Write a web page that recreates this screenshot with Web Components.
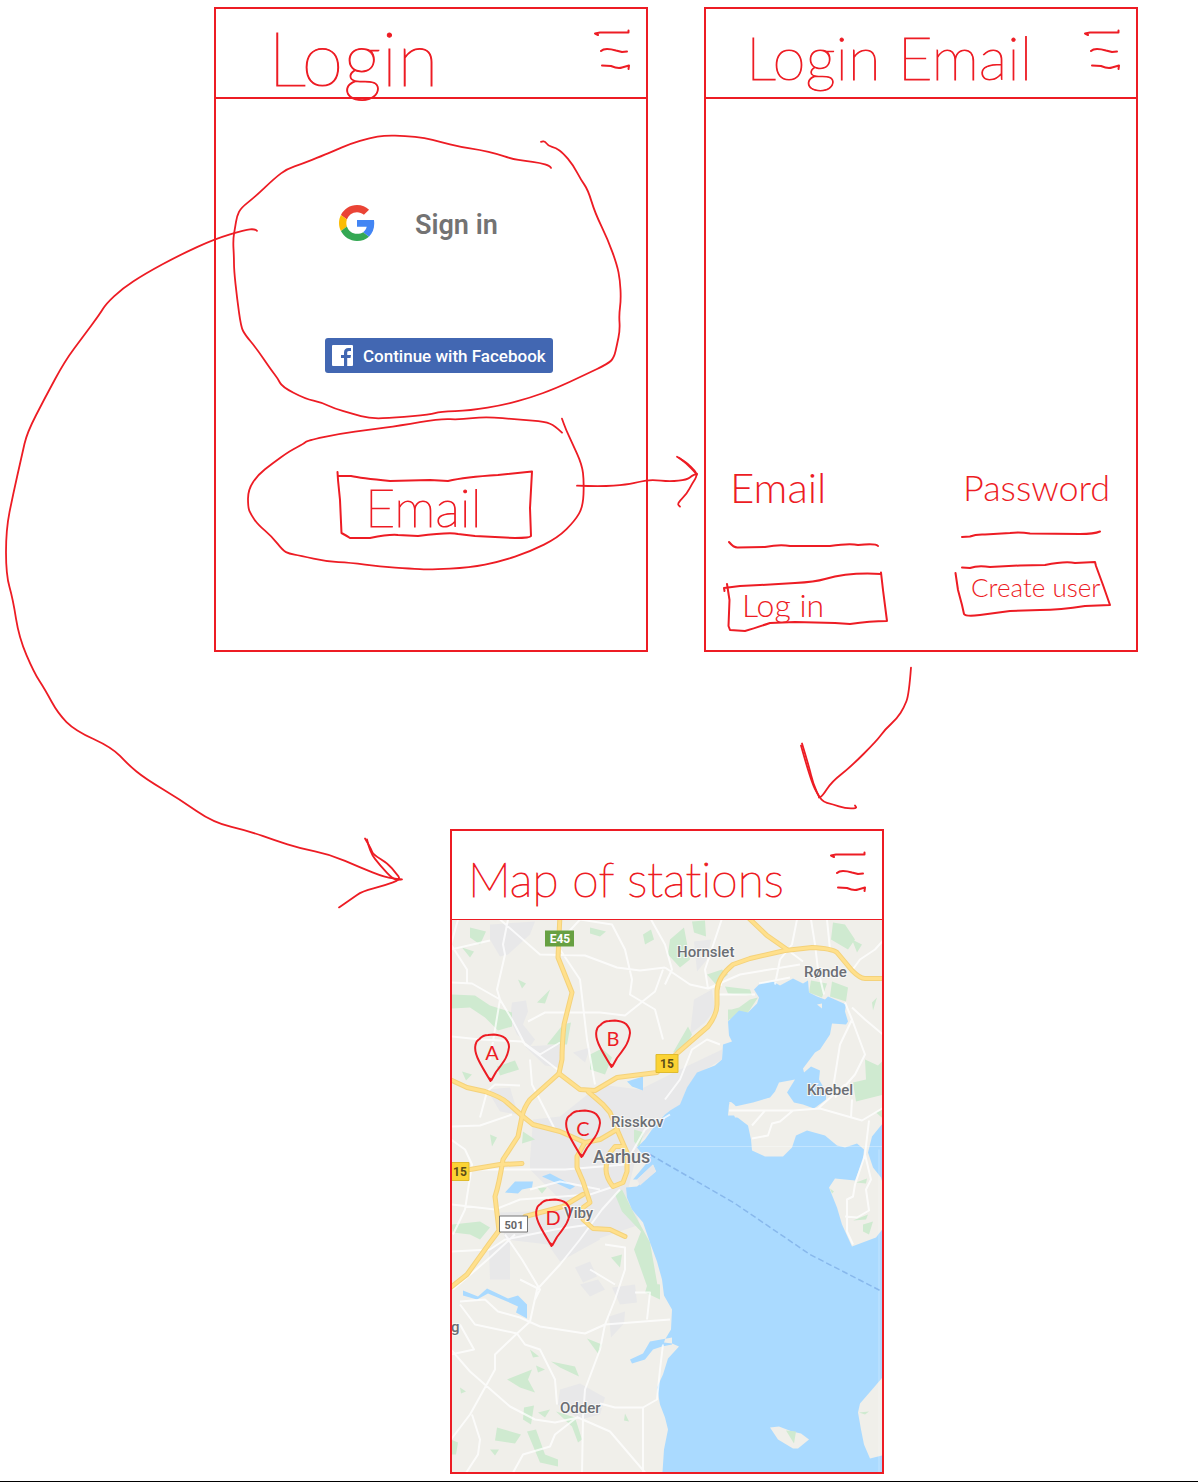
<!DOCTYPE html>
<html lang="en">
<head>
<meta charset="utf-8">
<title>Login flow wireframe</title>
<style>
  body { margin: 0; background: #fff; --ink: #ed1c24; }
</style>
</head>
<body>
<flow-board>
  <wire-screen class="login" heading="Login" style="--title-size: 76px; --title-inset: 52px">
    <login-options></login-options>
  </wire-screen>
  <wire-screen class="email" heading="Login Email" style="--title-size: 60px; --title-inset: 40px">
    <email-form></email-form>
  </wire-screen>
  <wire-screen class="map" heading="Map of stations" style="--title-size: 48px; --title-inset: 16px; --rule: 1px">
    <station-map></station-map>
  </wire-screen>
</flow-board>

<script>
const HAND = '"Lato", "Open Sans", sans-serif';

// Turns "x,y x,y ..." into a path that runs smoothly through the midpoints.
function smooth(points) {
  const p = points.trim().split(/\s+/).map(s => s.split(',').map(Number));
  let d = `M${p[0]}`;
  for (let i = 1; i < p.length - 1; i++) {
    d += `Q${p[i]} ${(p[i][0] + p[i + 1][0]) / 2},${(p[i][1] + p[i + 1][1]) / 2}`;
  }
  return d + `L${p[p.length - 1]}`;
}
const strokes = list => list.map(s => `<path d="${smooth(s)}"/>`).join('');

function define(name, render) {
  customElements.define(name, class extends HTMLElement {
    connectedCallback() {
      if (!this.shadowRoot) this.attachShadow({ mode: 'open' }).innerHTML = render(this);
    }
  });
}

define('flow-board', () => `
<style>
  :host {
    position: relative; display: grid; box-sizing: border-box;
    grid-template-columns: minmax(0,214fr) minmax(0,236fr) minmax(0,198fr) minmax(0,56fr) minmax(0,180fr) minmax(0,254fr) minmax(0,60fr);
    grid-auto-rows: auto; row-gap: 177px; padding: 7px 0; border-bottom: 1px solid #000;
  }
  ::slotted(.login) { grid-area: 1 / 2 / 2 / 4; }
  ::slotted(.email) { grid-area: 1 / 5 / 2 / 7; }
  ::slotted(.map) { grid-area: 2 / 3 / 3 / 6; }
  svg { position: absolute; inset: 0; width: 100%; height: 100%; pointer-events: none;
        fill: none; stroke: var(--ink); stroke-width: 1.8; stroke-linecap: round; stroke-linejoin: round; }
</style>
<slot></slot>
<svg viewBox="0 0 1198 1482" preserveAspectRatio="none" aria-hidden="true">${strokes([
  '551,168 550,166 540,163 525,161 512,159 497,154 480,150 460,147 440,142 425,138 405,136 385,135.5 370,138 350,144 334,151 322,156 302,164 287,169 275,178 255,197 241,208 237,216 235,228 233,240 234,258 234,270 237,298 241,327 245,335 256,348 271,370 278,379 282,387 305,399 322,403 335,409 352,414 370,419 395,418 430,415 440,412 470,411 505,405 530,398 555,389 585,375 608,364 614,358 617,345 620,330 619,315 621,300 620,280 617,265 608,240 595,213 588,190 581,180 573,165 563,153 556,148 548,146 545,141 541,142',
  '562,433 555,426 545,422 520,420 485,417 460,420 440,419 400,426 370,430 340,434 307,441 304,444 290,451 272,464 258,475 248,490 248,508 251,515 258,525 272,537 283,551 289,554 300,556 327,562 350,563 380,567 410,569 430,570 470,568 500,562 530,552 558,538 575,521 583,507 584,482 582,465 572,443 566,430 562,419',
  '577,486 600,487 627,485 640,482 652,480 670,482 687,480 692,476 697,474',
  '677,457 684,461 691,467 698,475 692,484 687,494 677,504 680,507',
  '679,458 686,463 697,475',
  '257,231 255,229 245,230 215,239 180,255 145,274 122,289 106,304 100,314 83,337 65,361 45,398 27,433 22,455 13,495 6,530 6,575 13,600 19,638 34,673 45,690 58,714 75,731 112,748 128,765 145,779 180,800 213,823 250,832 275,841 300,849 330,855 360,868 385,878 401,880',
  '365,839 371,849 373,855 388,864 396,874 401,880 385,886 362,892 352,899 339,908',
  '367,840 370,853 380,866 394,881 402,880',
  '911,668 909,695 904,708 897,719 885,730 877,741 850,768 832,782 822,797 819,798',
  '802,744 809,767 813,784 821,802 833,805 845,809 857,809 855,806',
  '801,746 811,782 819,797'
])}</svg>`);

define('wire-screen', el => `
<style>
  :host { display: flex; flex-direction: column; box-sizing: border-box; min-height: 645px; border: 2px solid var(--ink); }
  header { display: flex; align-items: center; justify-content: space-between; box-sizing: border-box;
           height: calc(88px + var(--rule, 2px)); padding: 0 14px 0 var(--title-inset); border-bottom: var(--rule, 2px) solid var(--ink); }
  h1 { margin: 0; padding-top: 8px; color: var(--ink); font: 100 var(--title-size)/72px ${HAND}; font-variant-ligatures: none;
       -webkit-text-stroke: 1px var(--ink); white-space: nowrap; }
  button { padding: 0 0 6px; border: 0; background: none; display: block; }
  svg { display: block; width: 38px; height: 42px; fill: none; stroke: var(--ink); stroke-width: 2; stroke-linecap: round; stroke-linejoin: round; }
  main { flex: 1; display: flex; flex-direction: column; }
  ::slotted(*) { flex: 1; }
</style>
<header>
  <h1>${el.getAttribute('heading')}</h1>
  <button aria-label="Menu"><svg viewBox="594 28 38 42">
    <path d="M598 34l-3-1.500 5-1h28.500v-2M601 50q2-2 6-2t9 1.500l6 1.500 5-.5M602 64.500l9 .5q7 3 11 1.500l7-2-.5 3.500"/></svg></button>
</header>
<main><slot></slot></main>`);

define('sketch-button', el => `
<style>
  :host { display: block; }
  button { position: relative; display: flex; box-sizing: border-box; width: 100%; height: 72px;
           align-items: var(--align, center); padding: var(--drop, 8px) 0 0 var(--inset, 16px); border: 0; background: none;
           color: var(--ink); font: var(--weight, 300) var(--size)/40px ${HAND}; -webkit-text-stroke: var(--thicken, 0) var(--ink); white-space: nowrap; }
  svg { position: absolute; inset: 0; width: 100%; height: 100%; overflow: visible; fill: none; stroke: var(--ink); stroke-width: 2; stroke-linejoin: round; stroke-linecap: round; }
</style>
<button><svg viewBox="${el.getAttribute('view')}" preserveAspectRatio="none" aria-hidden="true"><path d="${el.getAttribute('outline')}"/></svg><slot></slot></button>`);

define('login-options', () => `
<style>
  :host { display: flex; flex-direction: column; align-items: center; gap: 96px; padding: 105px 0 0 16px; }
  button, sketch-button { width: 228px; box-sizing: border-box; }
  button { display: flex; align-items: center; border: 0; font-family: Roboto, sans-serif; white-space: nowrap; }
  .google { height: 38px; padding: 0 0 0 14px; gap: 40px; background: none; color: #737373; font-size: 27px; font-weight: 600; }
  .google svg { width: 36px; height: 36px; }
  .google span { padding-top: 4px; }
  .facebook { height: 35px; padding: 0 0 0 7px; gap: 10px; border-radius: 3px; background: #4267b2; color: #fff; font-size: 17px; font-weight: 500; }
  .facebook svg { width: 21px; height: 21px; }
  sketch-button { --size: 52px; --inset: 40px; --drop: 4px; --weight: 100; --thicken: 1px; }
</style>
<button class="google"><svg viewBox="0 0 48 48" aria-hidden="true">
  <path fill="#ea4335" d="M24 9.500c3.540 0 6.710 1.220 9.210 3.600l6.850-6.850C35.900 2.380 30.470 0 24 0 14.620 0 6.510 5.380 2.560 13.220l7.980 6.190C12.430 13.720 17.740 9.500 24 9.500z"/>
  <path fill="#4285f4" d="M46.980 24.550c0-1.570-.15-3.090-.38-4.550H24v9.020h12.940c-.58 2.960-2.260 5.480-4.780 7.180l7.730 6c4.510-4.180 7.090-10.360 7.090-17.650z"/>
  <path fill="#fbbc05" d="M10.530 28.590c-.48-1.450-.76-2.990-.76-4.590s.27-3.140.76-4.590l-7.980-6.190C.92 16.460 0 20.120 0 24s.92 7.540 2.560 10.780l7.970-6.190z"/>
  <path fill="#34a853" d="M24 48c6.480 0 11.930-2.130 15.890-5.810l-7.730-6c-2.150 1.450-4.920 2.300-8.160 2.300-6.260 0-11.570-4.220-13.470-9.910l-7.980 6.190C6.510 42.620 14.620 48 24 48z"/></svg><span>Sign in</span></button>
<button class="facebook"><svg viewBox="0 0 21 21" aria-hidden="true"><rect width="21" height="21" rx="1" fill="#fff"/>
  <path fill="#4267b2" d="M12 21v-8H9v-3h3V7.500C12 4.500 13.700 3 16.300 3H19v3h-2c-1.500 0-1.800.8-1.800 1.800V10H19l-.5 3h-3.300v8z"/></svg>Continue with Facebook</button>
<sketch-button view="325 469 228 72" outline="M337.500 472L338 480 340 500 341.500 533Q347 536 350 538L370 538Q390 534 398 535L418 536Q450 532 458 534L475 536 515 538Q530 538 531 536L530 508 532 471.500 498 475Q465 477 448 481L430 480 390 481Q360 478 351 476L338 476">Email</sketch-button>`);

define('sketch-field', el => `
<style>
  :host { display: block; }
  label { display: block; height: 52px; padding-left: 4px; color: var(--ink); font: 300 var(--size)/48px ${HAND}; white-space: nowrap; box-sizing: border-box; }
  div { position: relative; height: 44px; }
  input { box-sizing: border-box; width: 100%; height: 100%; padding: 4px; border: 0; outline: 0; background: none; color: var(--ink); font: 300 20px ${HAND}; }
  svg { position: absolute; inset: 0; width: 100%; height: 100%; pointer-events: none; overflow: visible; fill: none; stroke: var(--ink); stroke-width: 2; stroke-linecap: round; }
</style>
<label for="f">${el.getAttribute('label')}</label>
<div><input id="f" type="${el.getAttribute('type')}"><svg viewBox="${el.getAttribute('view')}" preserveAspectRatio="none" aria-hidden="true"><path d="${el.getAttribute('line')}"/></svg></div>`);

define('email-form', () => `
<style>
  :host { display: flex; }
  form { flex: 1; display: grid; grid-template-columns: 1fr 1fr; column-gap: 76px; align-content: end; padding: 0 20px 19px; }
  form > * { min-width: 0; }
</style>
<form>
  <sketch-field style="--size: 42px" label="Email" type="email" view="726 515 157 44" line="M729 542Q734 548 738 547.500L765 547Q780 544 790 546L830 546Q850 543 858 545Q876 543 878 546"></sketch-field>
  <sketch-field style="--size: 36px" label="Password" type="password" view="959 515 157 44" line="M962 537L970 536.500Q976 534 985 534.500L1010 533Q1020 532 1030 533.500L1080 534Q1094 534 1100 531.500"></sketch-field>
  <sketch-button style="--size: 32px; --inset: 16px; --drop: 20px" view="726 559 157 72" outline="M724.500 591L724 588 740 586 760 585 795 583Q815 582 825 579Q850 572 881 574M881 572.500L883 590 887 621Q870 621 850 624L835 623 795 622 770 623Q755 628 745 631L730 630 728.500 626 729.500 600 727 584">Log in</sketch-button>
  <sketch-button style="--size: 26px; --inset: 12px; --align: flex-start; --drop: 8px" view="959 559 157 72" outline="M962 567.500L970 568Q978 565 990 567L1020 565.500 1045 565Q1065 561 1075 563L1095 562 1096 566 1103 585 1110 605 1085 606Q1060 610 1040 610L1010 611 980 615Q966 617 964 614L962 605 958 590 955.500 573">Create user</sketch-button>
</form>`);

define('map-pin', () => `
<style>
  :host { position: absolute; width: 36px; height: 50px; display: flex; justify-content: center; color: var(--ink); font: 400 20px/38px ${HAND}; }
  svg { position: absolute; inset: 0; fill: none; stroke: var(--ink); stroke-width: 2; stroke-linejoin: round; stroke-linecap: round; }
</style>
<svg viewBox="0 0 36 50" width="36" height="50" aria-hidden="true"><path d="M16.500 48Q8 34 5 28Q0 18 1.500 12Q2 8 5.500 6Q9 2 14 2L20 1.500Q27 2 31 5Q35 9 35 14Q34 22 30 28Q26 34 22 39L17.500 47 15 45"/></svg>
<slot></slot>`);

define('station-map', () => `
<style>
  :host { display: block; position: relative; overflow: hidden; }
  svg { position: absolute; inset: 0; width: 100%; height: 100%; display: block; font-family: Roboto, sans-serif; }
  .w { fill: #aadaff; } .g { fill: #cfead0; } .u { fill: #e8e8e9; } .land { fill: #f0efea; }
  .r { fill: none; stroke: #fff; stroke-width: 2; stroke-linejoin: round; opacity: .75; }
  .h { fill: none; stroke-linejoin: round; stroke-linecap: round; }
  .t { fill: #6b6e74; stroke: #f8f8f6; stroke-width: 2; paint-order: stroke; font-size: 15px; font-weight: 500; }
  .s { font-size: 12px; font-weight: 700; text-anchor: middle; }
</style>
<svg viewBox="452 920 430 553" preserveAspectRatio="xMidYMid slice">
  <defs><g id="hw">
    <path d="M560 915L558 958 572 993 564 1025Q562 1045 562 1060L559 1074 530 1100Q524 1108 522 1117L518 1137 503 1160Q499 1185 495 1197L499 1231 490 1243 467 1275 448 1290"/>
    <path d="M448 1079L467 1088 485 1092Q502 1098 507 1103L523 1117 533 1125 560 1132 585 1143"/>
    <path d="M559 1074L580 1090 595 1091 617 1078 657 1073 678 1053 708 1027Q717 1015 717 1005V991Q718 977 733 965L750 959 785 951 812 948Q832 949 837 953L852 971Q860 979 865 979H886"/>
    <path d="M745 915L767 936 787 950"/>
    <path d="M588 1092L603 1105 610 1113 617 1130 627 1153 627 1172 623 1183 613 1187Q606 1178 606 1170L607 1157 615 1147H623"/>
    <path d="M448 1173L470 1170 500 1165 522 1164"/>
    <path d="M617 1130L600 1140 585 1143 577 1157V1168L583 1182 590 1203 583 1208V1220L593 1229 610 1230 625 1237"/>
    <path d="M525 1217L563 1207 583 1195"/></g></defs>
  <rect class="land" x="440" y="910" width="460" height="580"/>
  <path class="u" d="M490 925L535 922 530 935 508 955 500 957 490 940zM694 942L711 940 707 960 697 972zM694 1000L712 990 715 1010 705 1023 690 1035zM512 1003L526 1001 528 1012 523 1025 535 1040 530 1047 517 1035 510 1020zM525 1047L560 1045 560 1068 545 1066zM533 1120L560 1117 600 1085 640 1090 680 1070 722 1050 722 1060 697 1075 686 1090 681 1105 668 1112 640 1142 628 1190 640 1225 590 1242 560 1200 530 1170 530 1160zM487 1090L510 1088 518 1115 500 1112zM489 1250L510 1240 510 1280 490 1280zM500 1213L590 1210 600 1240 560 1262 548 1245 505 1240zM575 1268L590 1262 597 1277 583 1283zM580 1285L598 1280 605 1290 590 1297zM612 1288L635 1285 637 1303 620 1305zM609 1317L625 1312 624 1324 611 1338zM560 1390L580 1384 605 1398 600 1415 580 1420 558 1405zM573 1053L590 1048 585 1063z"/>
  <path class="g" d="M470 928L486 932 480 945 470 938zM462 948L474 952 470 958zM590 928L606 932 600 937 590 934zM643 935L651 930 654 940 645 945zM451 995L475 996 490 1006 512 1013 512 1027 498 1031 485 1018 470 1008 451 1009zM518 980L526 984 522 989zM540 1000L550 990 545 1004 537 1003zM563 1025L571 1023 567 1045 547 1045zM462 1072L472 1075 466 1081zM497 1067L515 1061 519 1070 500 1076zM590 1055L602 1049 612 1058 605 1075 590 1070zM670 940L684 928 690 960 680 968 668 955zM692 922L705 921 706 937 694 933zM707 975L722 970 728 975 716 985zM728 1011L739 1008 750 1000 758 998 748 1013 729 1020zM725 987L750 990 752 996 728 994zM728 1010L735 1010 728 1022zM833 923L845 925 855 940 848 950 831 940zM811 981L827 984 822 998 809 993zM832 982L848 988 846 1002 830 997zM852 940L862 945 857 953zM872 1003L877 998 873 1011zM865 1060L878 1066 884 1060V1095L856 1102 853 1083 866 1080zM673 1053L688 1027 692 1035 684 1050zM634 1130L644 1133 639 1148 634 1142zM490 1135L497 1138 492 1147zM523 1132L535 1140 522 1144zM537 1188L547 1188 542 1194zM615 1195L622 1190 633 1212 650 1243 660 1300 650 1295 634 1250 641 1232 622 1212zM451 1225L480 1222 490 1228 480 1240 470 1235 453 1233zM611 1258L622 1255 620 1268zM648 1283L660 1285V1300L645 1293zM587 1339L602 1345 598 1354zM507 1380L532 1370 528 1380 535 1393 520 1388zM551 1362L575 1367 579 1377 560 1368zM530 1350L539 1357 533 1358zM536 1366L545 1370 538 1373zM524 1408L534 1406 531 1425 523 1420zM538 1413L550 1410 545 1418zM556 1412L575 1418 582 1440 578 1443 572 1427zM497 1428L521 1435 515 1444 495 1441zM527 1432L536 1430 545 1455 558 1460 558 1467 540 1463zM490 1450L499 1450 495 1456zM460 1388L466 1392 461 1394zM451 1440L458 1443 456 1455H451zM625 1414L629 1422 624 1421z"/>
  <path class="w" d="M670 1111L680 1105 687 1088 697 1073 715 1066 722 1060 723 1045 732 1042 729 1036 728 1022 739 1011 748 1013 757 1004 759 998 754 990 760 984 773 982 780 986 793 979 803 984 808 981 809 993 817 997 825 1000 828 997 846 1005 845 1012 848 1022 846 1025 832 1024 830 1035 820 1050 815 1053 803 1069 804 1073 811 1067 820 1071 819 1080 826 1092 826 1100 814 1109 803 1105 794 1103 787 1093 795 1080 779 1083 775 1092 770 1098 753 1103 735 1107 731 1103 729 1105 728 1116 735 1116 748 1126 751 1140 752 1151 765 1157 783 1157 792 1148 796 1136 807 1131 825 1136 837 1146 845 1148 857 1144 864 1150 863 1160 855 1181 835 1179 829 1188 837 1208 842 1225 852 1247 876 1238 886 1225V1374L873 1389 860 1404 858 1413 861 1430 864 1445 870 1459 886 1455V1480H662L664 1450 668 1430 665 1418 660 1405 657 1388 663 1375 668 1359 679 1347 672 1344 664 1343 665 1340 671 1330 672 1310 664 1296 662 1280 657 1262 650 1243 643 1223 632 1210 627 1198 626 1188 637 1187 656 1172 653 1165 637 1180 633 1180 648 1162 640 1152 637 1148 645 1140 652 1130 665 1115zM886 1120L872 1137 868 1153 873 1168 881 1178 886 1195z
    M672 1338L650 1342 643 1354 630 1360 632 1364 645 1360 653 1350 662 1347 672 1345zM463 1291L478 1297 487 1289 508 1299 518 1296 527 1305 527 1319 516 1313 518 1307 507 1302 488 1294 477 1300 463 1296zM505 1193L515 1182 533 1182 532 1188 522 1190 518 1194zM542 1177L550 1174 575 1187 570 1190 553 1182zM627 1082L643 1077V1091L632 1087z"/>
  <path class="u" d="M637 1180L653 1165 656 1172 640 1186z"/>
  <path class="land" d="M729 1103Q731 1101 736 1107L752 1106 768 1099 783 1097 793 1105 815 1109 808 1117 735 1118zM770 1428L779 1427 792 1432 801 1434 809 1440 798 1449H793L778 1440zM817 1005L822 1004 822 1009z"/>
  <path class="g" d="M786 1431L796 1432 794 1444zM856 1183L867 1179 866 1184zM853 1221L868 1215 866 1220zM863 1225L873 1222 869 1235 863 1232zM830 1189L834 1192 832 1194zM859 1413L869 1412 865 1415zM876 1113L884 1109V1120z"/>
  <path class="r" d="M451 950L490 941M458 920L451 945 467 970 467 983M508 920L503 945 505 955 497 990 500 1000 490 1060M451 983L472 984 500 1000 512 1020 525 1045 560 1072M500 920L540 955 585 956 617 968 640 971 665 968M555 947L580 920 612 925 625 950 632 980 630 995 655 1010 663 1040M560 950L580 980 587 1040 595 1085M528 1022L545 1013 600 1013 625 1016 655 992 663 970M451 1037L480 1040 522 1042 540 1055 560 1043M480 1118L487 1092 495 1085 520 1086M530 1060L532 1085 555 1130M665 968L690 985 708 989 722 985M722 919L705 970 708 989 740 975 800 965M787 950L803 962M775 985L780 960 792 945 797 920M811 920L815 945 818 970 824 995M759 984L790 978M718 995H755M827 920L830 950M852 971L860 960 875 950 884 940M852 1008L865 1020 884 1036M845 1003L852 1020 865 1055 855 1075 835 1098M852 1020L840 1045 832 1095M651 920L665 945 672 970 665 985M665 1100L680 1080 692 1050 707 1040 720 1045
    M729 1111L793 1111 820 1109 862 1121 884 1108M793 1111L780 1122 772 1124 768 1136 752 1139M765 1111L752 1126M869 1121L865 1155 855 1185 853 1197 847 1200 847 1232 853 1245M865 1155L871 1180 866 1190 869 1211 857 1218 845 1217M852 1100L851 1118M818 1109L845 1085M451 1127L480 1126 512 1115M451 1140L465 1150 472 1165 465 1210 453 1235M475 1170L565 1170 625 1165 645 1130 670 1115M451 1205L495 1210 520 1200 590 1195 620 1185M451 1252L490 1250 505 1240 555 1230 590 1225M505 1235L522 1260 540 1290 535 1300M453 1290L490 1258 515 1235M620 1190L602 1210 580 1240 560 1265 537 1290 530 1322 517 1334M605 1245L625 1248 625 1270 615 1300 605 1325 600 1350 585 1390 583 1418 582 1475M460 1302L485 1300 498 1312 520 1318 540 1327 585 1334 605 1325 670 1320M460 1305L475 1325 517 1334 495 1355 495 1370 470 1415 451 1440M517 1334L525 1345 540 1350 555 1380 557 1405M451 1350L470 1372 510 1407 535 1420 555 1423 578 1418 610 1432 645 1473M472 1415L480 1440 478 1455 465 1475M578 1417L555 1435 550 1447 523 1455 512 1475M643 1475L643 1408 615 1408 600 1404M643 1408L657 1400 660 1370 663 1345M635 1293L650 1293 647 1320M520 1280L540 1290M451 1355L474 1350 460 1325M590 1270L615 1285M530 1190L560 1182 600 1190"/>
  <path class="r" style="stroke-width:1;opacity:.3" d="M640 1147H884M879 1150V1475"/>
  <use href="#hw" class="h" stroke="#f4d27b" stroke-width="5"/>
  <use href="#hw" class="h" stroke="#ffe08c" stroke-width="3"/>
  <path d="M650 1155L735 1204 810 1255 884 1293" fill="none" stroke="#88b8ec" stroke-width="1.500" stroke-dasharray="6 3"/>
  <path d="M545 931h29v16h-29z" fill="#67a042"/><path d="M656 1055h22v18h-22zM450 1163h19v18h-19z" fill="#fbd334" stroke="#dfbb2e"/><path d="M499.500 1216.500h28v16h-28z" fill="#fff" stroke="#777"/>
  <text class="s" x="560" y="943" fill="#fff">E45</text><text class="s" x="667" y="1068" fill="#5b4d18">15</text><text class="s" x="460" y="1176" fill="#5b4d18">15</text><text class="s" x="514" y="1229" fill="#666" style="font-size:11px">501</text>
  <g class="t"><text x="677" y="957">Hornslet</text><text x="804" y="977">Rønde</text><text x="807" y="1095">Knebel</text><text x="611" y="1127">Risskov</text><text x="593" y="1163" style="font-size:18px">Aarhus</text><text x="564" y="1218">Viby</text><text x="560" y="1413">Odder</text><text x="451" y="1332">g</text></g>
</svg>
<map-pin style="left: calc(22 / 430 * 100%); top: calc(113 / 553 * 100%)">A</map-pin>
<map-pin style="left: calc(143 / 430 * 100%); top: calc(99 / 553 * 100%)">B</map-pin>
<map-pin style="left: calc(113 / 430 * 100%); top: calc(189 / 553 * 100%)">C</map-pin>
<map-pin style="left: calc(83 / 430 * 100%); top: calc(279 / 553 * 100%)">D</map-pin>`);
</script>
</body>
</html>
